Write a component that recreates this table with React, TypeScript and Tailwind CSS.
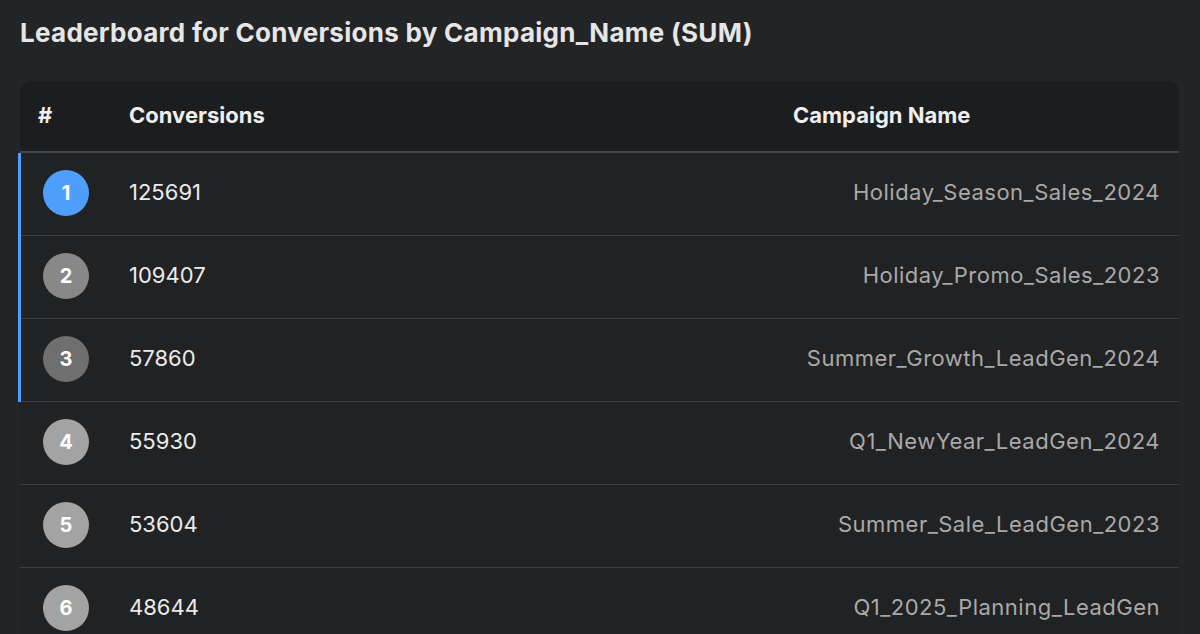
import React from "react";

const rows = [
  { n: 1, v: "125691", name: "Holiday_Season_Sales_2024" },
  { n: 2, v: "109407", name: "Holiday_Promo_Sales_2023" },
  { n: 3, v: "57860", name: "Summer_Growth_LeadGen_2024" },
  { n: 4, v: "55930", name: "Q1_NewYear_LeadGen_2024" },
  { n: 5, v: "53604", name: "Summer_Sale_LeadGen_2023" },
  { n: 6, v: "48644", name: "Q1_2025_Planning_LeadGen" },
];

function Badge({ n }: { n: number }) {
  const cls =
    n === 1
      ? "bg-[#4d9ffb]"
      : n === 2
      ? "bg-[#888888]"
      : n === 3
      ? "bg-[#6f6f6f]"
      : "bg-[#a3a3a3]";
  return (
    <div
      className={`w-[46px] h-[46px] rounded-full flex items-center justify-center text-white font-bold text-[20px] ${cls}`}
    >
      {n}
    </div>
  );
}

export default function App() {
  return (
    <div
      className="w-[1200px] h-[634px] overflow-hidden bg-[#232425] text-[#ececec] px-5 pt-[17px]"
      style={{ fontFamily: "Inter, 'Noto Sans', sans-serif" }}
    >
      <h1 className="text-[26px] font-bold leading-[32px] text-[#e6e6e6] tracking-[0.28px]">
        Leaderboard for Conversions by Campaign_Name (SUM)
      </h1>
      <div className="mt-[32px] w-[1159px] rounded-t-[12px] bg-[#212223]">
        <div className="flex items-center h-[72px] pb-[2px] bg-[#1c1d1e] rounded-t-[12px] border-b-2 border-[#454647] text-[22px] font-bold text-[#efefef]">
          <div className="w-[91px] pl-[18px]">#</div>
          <div className="flex-1 pl-[18px]">Conversions</div>
          <div className="w-[404px] pl-[18px]">Campaign Name</div>
        </div>
        {rows.map((r) => (
          <div
            key={r.n}
            className="relative flex items-center h-[83px] pb-[3px] border-b border-[#3b3c3d] text-[22px]"
          >
            {r.n <= 3 && (
              <div className="absolute left-[-2px] top-0 bottom-[-1px] w-[3px] bg-[#4d9ffb]" />
            )}
            <div className="w-[91px] pl-[23px]">
              <Badge n={r.n} />
            </div>
            <div className="flex-1 pl-[18px] text-[#ebebeb]">{r.v}</div>
            <div className="w-[404px] pr-[19px] text-right text-[#a9a9a9] tracking-[0.5px]">{r.name}</div>
          </div>
        ))}
      </div>
    </div>
  );
}
